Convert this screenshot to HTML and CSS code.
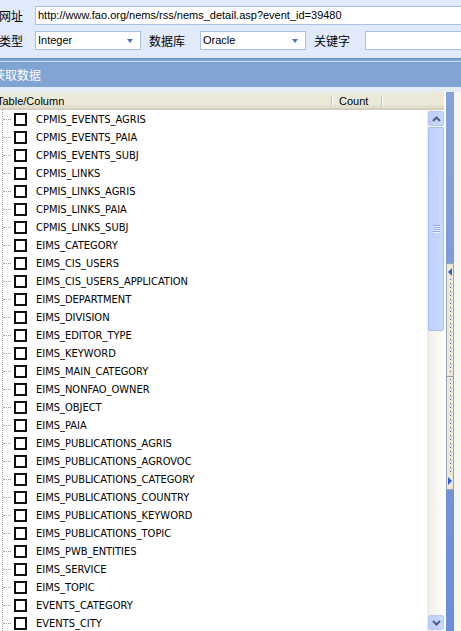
FILE: index.html
```html
<!DOCTYPE html>
<html>
<head>
<meta charset="utf-8">
<link rel="stylesheet" href="styles.css">
</head>
<body>
<div class="top">
  <div class="row">
    <span class="lbl">网址</span>
    <div class="field url">http://www.fao.org/nems/rss/nems_detail.asp?event_id=39480</div>
  </div>
  <div class="row">
    <span class="lbl">类型</span>
    <div class="field sel">Integer<i class="arrow"></i></div>
    <span class="lbl2">数据库</span>
    <div class="field sel">Oracle<i class="arrow"></i></div>
    <span class="lbl2">关键字</span>
    <div class="field kw"></div>
  </div>
</div>
<div class="band"><span class="band-title">获取数据</span></div>
<div class="main">
  <div class="grid">
    <div class="head">
      <div class="hcol c1">Table/Column</div>
      <div class="hcol c2">Count</div>
      <div class="hcol c3"></div>
    </div>
    <div class="body">
      <ul class="rows">
        <li class="item"><span class="branch"></span><span class="cb"></span><span class="name">CPMIS_EVENTS_AGRIS</span></li>
        <li class="item"><span class="branch"></span><span class="cb"></span><span class="name">CPMIS_EVENTS_PAIA</span></li>
        <li class="item"><span class="branch"></span><span class="cb"></span><span class="name">CPMIS_EVENTS_SUBJ</span></li>
        <li class="item"><span class="branch"></span><span class="cb"></span><span class="name">CPMIS_LINKS</span></li>
        <li class="item"><span class="branch"></span><span class="cb"></span><span class="name">CPMIS_LINKS_AGRIS</span></li>
        <li class="item"><span class="branch"></span><span class="cb"></span><span class="name">CPMIS_LINKS_PAIA</span></li>
        <li class="item"><span class="branch"></span><span class="cb"></span><span class="name">CPMIS_LINKS_SUBJ</span></li>
        <li class="item"><span class="branch"></span><span class="cb"></span><span class="name">EIMS_CATEGORY</span></li>
        <li class="item"><span class="branch"></span><span class="cb"></span><span class="name">EIMS_CIS_USERS</span></li>
        <li class="item"><span class="branch"></span><span class="cb"></span><span class="name">EIMS_CIS_USERS_APPLICATION</span></li>
        <li class="item"><span class="branch"></span><span class="cb"></span><span class="name">EIMS_DEPARTMENT</span></li>
        <li class="item"><span class="branch"></span><span class="cb"></span><span class="name">EIMS_DIVISION</span></li>
        <li class="item"><span class="branch"></span><span class="cb"></span><span class="name">EIMS_EDITOR_TYPE</span></li>
        <li class="item"><span class="branch"></span><span class="cb"></span><span class="name">EIMS_KEYWORD</span></li>
        <li class="item"><span class="branch"></span><span class="cb"></span><span class="name">EIMS_MAIN_CATEGORY</span></li>
        <li class="item"><span class="branch"></span><span class="cb"></span><span class="name">EIMS_NONFAO_OWNER</span></li>
        <li class="item"><span class="branch"></span><span class="cb"></span><span class="name">EIMS_OBJECT</span></li>
        <li class="item"><span class="branch"></span><span class="cb"></span><span class="name">EIMS_PAIA</span></li>
        <li class="item"><span class="branch"></span><span class="cb"></span><span class="name">EIMS_PUBLICATIONS_AGRIS</span></li>
        <li class="item"><span class="branch"></span><span class="cb"></span><span class="name">EIMS_PUBLICATIONS_AGROVOC</span></li>
        <li class="item"><span class="branch"></span><span class="cb"></span><span class="name">EIMS_PUBLICATIONS_CATEGORY</span></li>
        <li class="item"><span class="branch"></span><span class="cb"></span><span class="name">EIMS_PUBLICATIONS_COUNTRY</span></li>
        <li class="item"><span class="branch"></span><span class="cb"></span><span class="name">EIMS_PUBLICATIONS_KEYWORD</span></li>
        <li class="item"><span class="branch"></span><span class="cb"></span><span class="name">EIMS_PUBLICATIONS_TOPIC</span></li>
        <li class="item"><span class="branch"></span><span class="cb"></span><span class="name">EIMS_PWB_ENTITIES</span></li>
        <li class="item"><span class="branch"></span><span class="cb"></span><span class="name">EIMS_SERVICE</span></li>
        <li class="item"><span class="branch"></span><span class="cb"></span><span class="name">EIMS_TOPIC</span></li>
        <li class="item"><span class="branch"></span><span class="cb"></span><span class="name">EVENTS_CATEGORY</span></li>
        <li class="item"><span class="branch"></span><span class="cb"></span><span class="name">EVENTS_CITY</span></li>
      </ul>
      <div class="vscroll">
        <div class="sbtn"><svg width="9" height="6" viewBox="0 0 9 6"><path d="M1 5 L4.5 1.5 L8 5" fill="none" stroke="#4d6185" stroke-width="2"/></svg></div>
        <div class="thumb"><span class="grip"></span></div>
        <div class="track"></div>
        <div class="sbtn"><svg width="9" height="6" viewBox="0 0 9 6"><path d="M1 1 L4.5 4.5 L8 1" fill="none" stroke="#4d6185" stroke-width="2"/></svg></div>
      </div>
    </div>
  </div>
  <div class="gap"></div>
  <div class="splitter">
    <div class="handle">
      <span class="tri left"></span>
      <span class="dots"></span>
      <span class="sep"></span>
      <span class="dots"></span>
      <span class="tri right"></span>
    </div>
  </div>
  <div class="rest"></div>
</div>
</body>
</html>
```
FILE: styles.css
```css
html, body {
  margin: 0;
  padding: 0;
  width: 461px;
  height: 631px;
  overflow: hidden;
  background: #ffffff;
  font-family: "Liberation Sans", "Noto Sans CJK SC", sans-serif;
  font-size: 11px;
  color: #000;
}

.top {
  height: 58px;
  box-sizing: border-box;
  padding-top: 6px;
  background: #e0eafb;
  overflow: hidden;
}

.row {
  display: flex;
  align-items: center;
  height: 19px;
  white-space: nowrap;
}

.row + .row {
  margin-top: 6px;
}

.lbl {
  flex: none;
  width: 36px;
  margin-left: -1px;
  font-family: "Noto Sans CJK SC", sans-serif;
  font-size: 12px;
  line-height: 19px;
}

.lbl2 {
  flex: none;
  width: 59px;
  padding-left: 8px;
  box-sizing: border-box;
  font-family: "Noto Sans CJK SC", sans-serif;
  font-size: 12px;
  line-height: 19px;
}

.field {
  flex: none;
  position: relative;
  height: 19px;
  box-sizing: border-box;
  border: 1px solid #a9bfe3;
  background: #fff;
  padding-left: 2px;
  line-height: 17px;
  font-size: 11px;
}

.url {
  width: 470px;
}

.sel {
  width: 106px;
}

.kw {
  width: 120px;
}

.arrow {
  position: absolute;
  right: 7px;
  top: 7px;
  width: 0;
  height: 0;
  border-left: 3px solid transparent;
  border-right: 3px solid transparent;
  border-top: 4px solid #4f74b3;
}

.band {
  height: 34px;
  box-sizing: border-box;
  padding-top: 4px;
  background: linear-gradient(to bottom,
    #6d90c9 0, #6d90c9 1px,
    #7fa3d4 1px, #7fa3d4 3px,
    #d0ddf2 3px, #d0ddf2 4px,
    #80a5d4 4px, #80a5d4 29px,
    #e4ecf8 29px, #e4ecf8 34px);
  overflow: hidden;
  white-space: nowrap;
}

.band-title {
  display: block;
  margin-left: -7px;
  line-height: 25px;
  color: #fff;
  font-family: "Noto Sans CJK SC", sans-serif;
  font-size: 12px;
}

.main {
  display: flex;
  height: 539px;
}

.grid {
  flex: none;
  width: 444px;
  display: flex;
  flex-direction: column;
}

.head {
  flex: none;
  display: flex;
  height: 18px;
  box-sizing: border-box;
  background: #ebe9d8;
  border-bottom: 2px solid #d2cfbd;
  box-shadow: inset 0 -3px 0 #e2dfcc;
  white-space: nowrap;
  overflow: hidden;
}

.hcol {
  flex: none;
  position: relative;
  line-height: 16px;
  padding-top: 1px;
}

.c1 {
  width: 335px;
  margin-left: -3px;
}

.c2 {
  width: 50px;
  padding-left: 7px;
  box-sizing: border-box;
}

.c1::after, .c2::after {
  content: "";
  position: absolute;
  right: 0;
  top: 3px;
  width: 1px;
  height: 11px;
  background: #c7c4b0;
  box-shadow: 1px 0 0 #fff;
}

.c3 {
  flex: 1;
}

.body {
  flex: none;
  display: flex;
  height: 521px;
}

.rows {
  flex: 1;
  margin: 0;
  padding: 0;
  list-style: none;
  overflow: hidden;
  position: relative;
  background: #fff;
}

.rows::before {
  content: "";
  position: absolute;
  left: 2px;
  top: 0;
  bottom: 0;
  border-left: 1px dotted #a0a0a0;
}

.item {
  display: flex;
  align-items: center;
  height: 18px;
  white-space: nowrap;
}

.branch {
  flex: none;
  width: 8px;
  margin-left: 3px;
  border-top: 1px dotted #a0a0a0;
}

.cb {
  flex: none;
  width: 13px;
  height: 13px;
  box-sizing: border-box;
  margin-left: 3px;
  border: 2px solid #111;
  background: #fff;
}

.name {
  margin-left: 9px;
  font-family: "DejaVu Sans Condensed", "DejaVu Sans", sans-serif;
  font-stretch: condensed;
  font-size: 11px;
}

.vscroll {
  flex: none;
  width: 17px;
  box-sizing: border-box;
  padding: 1px 0 1px 1px;
  display: flex;
  flex-direction: column;
  background: linear-gradient(to right, #eeede5, #fdfdfa);
}

.sbtn {
  flex: none;
  height: 15px;
  box-sizing: border-box;
  border: 1px solid #b7c9f3;
  border-radius: 2px;
  background: linear-gradient(to right, #bccffb, #c9d8fd);
  display: flex;
  align-items: center;
  justify-content: center;
}

.thumb {
  flex: none;
  margin-top: 1px;
  height: 204px;
  box-sizing: border-box;
  border: 1px solid #a9bff5;
  border-radius: 2px;
  background: linear-gradient(to right, #bdd0fb, #c9d9fd);
  display: flex;
  align-items: center;
  justify-content: center;
}

.grip {
  width: 7px;
  height: 8px;
  background: repeating-linear-gradient(to bottom, #8da9ec 0, #8da9ec 1px, #eef3fe 1px, #eef3fe 2px);
}

.track {
  flex: 1;
}

.gap {
  flex: none;
  width: 2px;
  background: #fff;
}

.splitter {
  flex: none;
  width: 8px;
  position: relative;
  background: linear-gradient(to bottom, #85a2dc, #6a8edb);
}

.handle {
  position: absolute;
  left: 0;
  right: 0;
  top: 171px;
  height: 227px;
  box-sizing: border-box;
  border: 1px solid #9aa3b5;
  background: #ece9d8;
  display: flex;
  flex-direction: column;
  align-items: center;
  padding: 4px 0;
}

.dots {
  flex: 1;
  width: 1px;
  background: repeating-linear-gradient(to bottom, #3d63c4 0, #3d63c4 1px, transparent 1px, transparent 4px);
}

.sep {
  flex: none;
  width: 8px;
  height: 1px;
  margin: 2px 0;
  background: #a09e92;
}

.tri {
  flex: none;
  width: 0;
  height: 0;
  border-top: 4px solid transparent;
  border-bottom: 4px solid transparent;
  margin: 0 0 3px;
}

.tri.left {
  border-right: 4px solid #2f5fd8;
}

.tri.right {
  border-left: 4px solid #2f5fd8;
  margin: 3px 0 0;
}

.rest {
  flex: 1;
  background: #f6f5f0;
}
```
